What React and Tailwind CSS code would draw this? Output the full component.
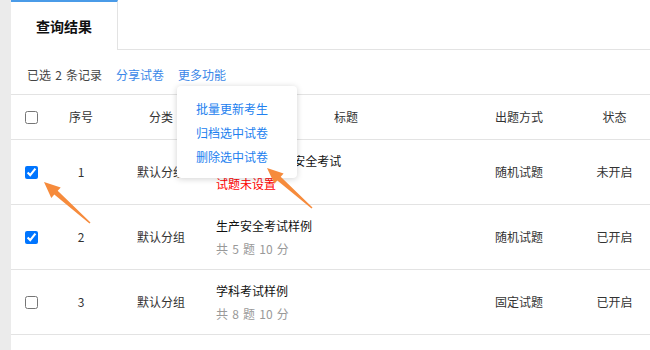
import React from "react";

const rows = [
  { id: 1, checked: true, cat: "默认分组", title: "2023年度 生产安全考试", sub: "试题未设置", red: true, mode: "随机试题", status: "未开启" },
  { id: 2, checked: true, cat: "默认分组", title: "生产安全考试样例", sub: "共 5 题 10 分", red: false, mode: "随机试题", status: "已开启" },
  { id: 3, checked: false, cat: "默认分组", title: "学科考试样例", sub: "共 8 题 10 分", red: false, mode: "固定试题", status: "已开启" },
];

function Row({ r }) {
  return (
    <div className="flex h-[65px] border-b border-[#e3e3e3] text-[12px] text-[#333]">
      <div className="w-[40px] flex items-center justify-center">
        <input type="checkbox" checked={r.checked} readOnly className="w-[13px] h-[13px] m-0" />
      </div>
      <div className="w-[60px] flex items-center justify-center">{r.id}</div>
      <div className="w-[100px] flex items-center justify-center">{r.cat}</div>
      <div className="w-[270px] flex flex-col justify-center pl-[5px] gap-[4px]">
        <div className="leading-[19px] text-[#111] whitespace-nowrap">{r.title}</div>
        <div className={"leading-[19px] [word-spacing:1.5px] " + (r.red ? "text-[#f00]" : "text-[#999]")}>{r.sub}</div>
      </div>
      <div className="w-[76px] flex items-center justify-center">{r.mode}</div>
      <div className="w-[115px] flex items-center justify-center">{r.status}</div>
    </div>
  );
}

export default function App() {
  return (
    <div
      className="relative w-[650px] h-[350px] overflow-hidden flex bg-[#ebebeb]"
      style={{ fontFamily: '"Noto Sans CJK SC", "Noto Sans", sans-serif' }}
    >
      <div className="w-[11px] shrink-0" />
      <div className="flex-1 bg-white flex flex-col min-w-0">
        <div className="flex h-[50px] shrink-0">
          <div className="w-[107px] border-t-2 border-r border-t-[#4a9be8] border-r-[#e3e3e3] flex items-center justify-center text-[14px] font-bold text-[#111]">
            查询结果
          </div>
          <div className="flex-1 border-b border-[#e3e3e3]" />
        </div>
        <div className="h-[44px] shrink-0 flex items-center pl-[16px] pt-[5px] text-[12px] gap-[14px]">
          <span className="text-[#444] [word-spacing:1.5px]">已选 2 条记录</span>
          <span className="text-[#3a87e8]">分享试卷</span>
          <span className="text-[#3a87e8]">更多功能</span>
        </div>
        <div className="border-t border-[#e3e3e3] w-[661px]">
          <div className="flex h-[45px] border-b border-[#e3e3e3] text-[12px] text-[#333]">
            <div className="w-[40px] flex items-center justify-center">
              <input type="checkbox" readOnly className="w-[13px] h-[13px] m-0" />
            </div>
            <div className="w-[60px] flex items-center justify-center">序号</div>
            <div className="w-[100px] flex items-center justify-center">分类</div>
            <div className="w-[270px] flex items-center justify-center">标题</div>
            <div className="w-[76px] flex items-center justify-center">出题方式</div>
            <div className="w-[115px] flex items-center justify-center">状态</div>
          </div>
          {rows.map((r) => (
            <Row key={r.id} r={r} />
          ))}
        </div>
      </div>

      <div className="absolute left-[177px] top-[86px] w-[120px] h-[92px] bg-white rounded-[4px] shadow-[0_1px_6px_rgba(0,0,0,0.18)] pt-[11px] pl-[19px] text-[12px] text-[#2180ef]">
        <div className="h-6 leading-6">批量更新考生</div>
        <div className="h-6 leading-6">归档选中试卷</div>
        <div className="h-6 leading-6">删除选中试卷</div>
      </div>

      <svg className="absolute left-0 top-0 pointer-events-none" width="650" height="350" viewBox="0 0 650 350">
        <polygon
          fill="#f68b3c"
          points="89.5,223.6 54.3,194.6 51.3,197.9 44,182 60.7,187.5 57.7,190.8 90.5,222.4"
        />
        <polygon
          fill="#f68b3c"
          points="311.5,208.6 277.3,180.5 274.4,183.8 267,168 283.6,173.4 280.7,176.7 312.5,207.4"
        />
      </svg>
    </div>
  );
}
